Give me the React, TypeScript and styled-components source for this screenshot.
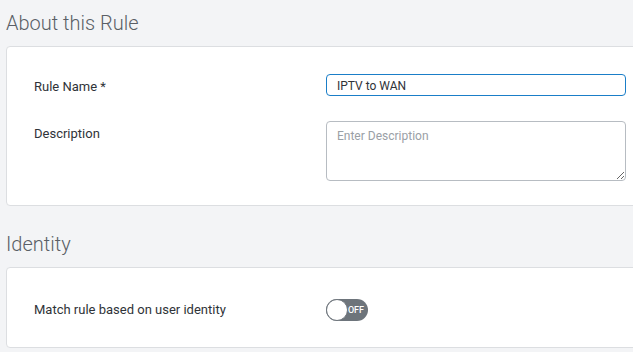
import React from "react";
import styled, { createGlobalStyle } from "styled-components";

const Global = createGlobalStyle`
  html, body { margin: 0; padding: 0; background: #f3f4f6; overflow: hidden; }
  body { font-family: Roboto, "Liberation Sans", sans-serif; }
  * { box-sizing: border-box; }
`;

const Page = styled.div`
  padding: 8px 0 0 6px;
  width: 633px;
  height: 352px;
`;

const SectionTitle = styled.h2`
  margin: 0;
  height: 38px;
  font-size: 20px;
  font-weight: 300;
  color: #5a5f66;
  line-height: 31px;
`;

const Card = styled.div<{ $top: number; $bottom: number }>`
  width: 650px;
  background: #fff;
  border: 1px solid #dcdee1;
  border-radius: 4px;
  padding: ${(p) => p.$top}px 0 ${(p) => p.$bottom}px 27px;
  display: grid;
  grid-template-columns: 292px 300px;
  row-gap: 23px;
  align-items: start;
  margin-bottom: 23px;
`;

const Label = styled.div`
  font-size: 13px;
  color: #2f3338;
  line-height: 23px;
  padding-top: 1px;
`;

const TextInput = styled.input`
  width: 300px;
  height: 22px;
  border: 1px solid #1a7ec8;
  border-radius: 4px;
  padding: 1px 10px 0;
  font-family: inherit;
  font-size: 12px;
  color: #2f3338;
  outline: none;
`;

const TextArea = styled.textarea`
  width: 300px;
  height: 60px;
  border: 1px solid #b7bcc2;
  border-radius: 4px;
  padding: 7px 10px;
  font-family: inherit;
  font-size: 12px;
  color: #2f3338;
  resize: vertical;
  outline: none;
  &::placeholder { color: #9aa0a6; }
`;

const ToggleRow = styled.div`
  height: 24px;
  display: flex;
  align-items: flex-end;
`;

const Toggle = styled.div`
  position: relative;
  width: 42px;
  height: 22px;
  border-radius: 11px;
  background: #6d747b;
  display: flex;
  align-items: center;
  justify-content: flex-end;
  padding-right: 4px;
  font-size: 9px;
  font-weight: 500;
  color: #fff;
`;

const Knob = styled.span`
  position: absolute;
  left: 0;
  top: 0;
  width: 22px;
  height: 22px;
  border-radius: 50%;
  background: #fff;
  border: 1.5px solid #6d747b;
`;

export default function App() {
  return (
    <Page>
      <Global />
      <SectionTitle>About this Rule</SectionTitle>
      <Card $top={27} $bottom={24}>
        <Label>Rule Name *</Label>
        <TextInput defaultValue="IPTV to WAN" />
        <Label>Description</Label>
        <TextArea placeholder="Enter Description" />
      </Card>
      <SectionTitle>Identity</SectionTitle>
      <Card $top={29} $bottom={26}>
        <Label>Match rule based on user identity</Label>
        <ToggleRow>
          <Toggle>
            <Knob />
            OFF
          </Toggle>
        </ToggleRow>
      </Card>
    </Page>
  );
}
